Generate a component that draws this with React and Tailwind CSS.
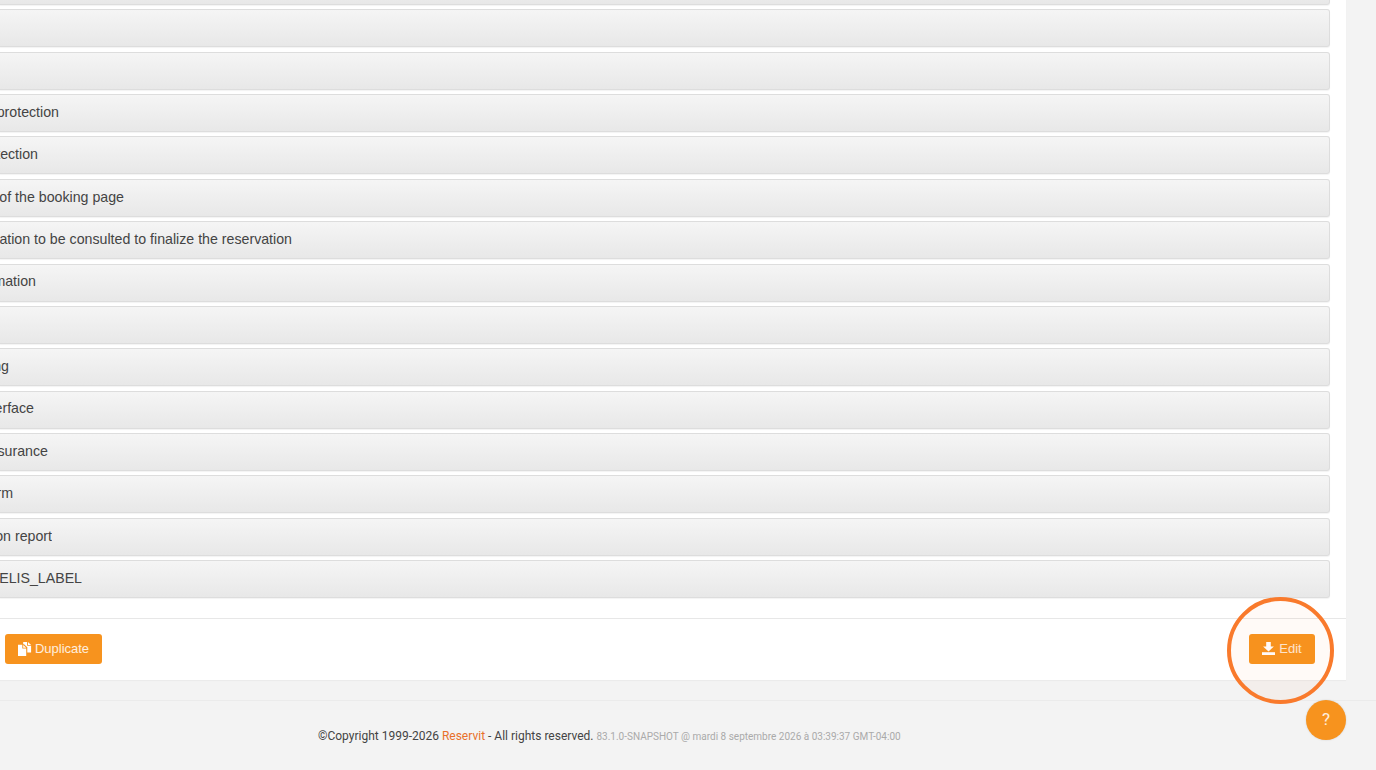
import React from 'react';

// Rows are cut by the left edge of the window: labels end-align in a box as wide as what is visible
const rows = [
  { text: '', w: 'w-0' },
  { text: '', w: 'w-0' },
  { text: '', w: 'w-0' },
  { text: 'Password protection', w: 'w-[59px]' },
  { text: 'Data protection', w: 'w-[38px]' },
  { text: 'Customization of the booking page', w: 'w-[124px]' },
  { text: 'Additional information to be consulted to finalize the reservation', w: 'w-[292px]' },
  { text: 'Confirmation', w: 'w-[36px]' },
  { text: '', w: 'w-0' },
  { text: 'Booking', w: 'w-[9px]' },
  { text: 'Interface', w: 'w-[34px]' },
  { text: 'Insurance', w: 'w-[48px]' },
  { text: 'Form', w: 'w-[13px]' },
  { text: 'Reservation report', w: 'w-[52px]' },
  { text: 'HOTELIS_LABEL', w: 'w-[82px]' },
];

const SaveIcon = () => (
  <svg viewBox="0 0 13 13" className="h-[13px] w-[13px] fill-current">
    <path d="M4.200 0h4.600v4.400h3.100L6.500 9.400 1.100 4.400h3.100z" />
    <path d="M0 10.200h13V13H0z" />
  </svg>
);

const DuplicateIcon = () => (
  <svg viewBox="0 0 14 14" className="h-[14px] w-[14px] fill-current">
    <path d="M5.200 0h3.900v3.800h4v6.700H9.300V5.300L6.100 2.200H5.200z" />
    <path d="M10 0l3.100 3H10z" />
    <path d="M0 2.800h4.300v3.700h3.900V14H0z" />
    <path d="M5.200 3l3 2.700h-3z" />
  </svg>
);

const App = () => {
  return (
    <div className="h-[770px] overflow-hidden bg-[#f3f3f3] font-['Liberation_Sans',sans-serif] relative">
      <div className="mr-[30px] -mt-[33px] h-[712.600px] bg-white shadow-[0_1px_1px_rgba(0,0,0,0.03)] flex flex-col">
        <div className="flex flex-col gap-[4.36px] pr-[16px]">
          {rows.map((row, i) => (
            <div
              key={i}
              className="h-[38px] flex items-center rounded-r-[3px] border border-l-0 border-[#dddddd] bg-gradient-to-b from-[#f5f5f5] to-[#e8e8e8] text-[14.2px] text-[#444444] shadow-[0_1px_1px_rgba(0,0,0,0.05)]"
            >
              <span className={`${row.w} flex justify-end overflow-hidden whitespace-nowrap pb-px`}>{row.text}</span>
            </div>
          ))}
        </div>
        <div className="mt-[19.600px] border-t border-[#e7e7e7] pt-[15px] pr-[31px] pl-[5px] flex justify-between">
          <button className="h-[30px] w-[97px] flex items-center justify-center gap-[3px] rounded-[3px] bg-[#f7931e] text-[13px] text-white/85">
            <span className="text-white"><DuplicateIcon /></span>
            <span className="pt-px">Duplicate</span>
          </button>
          <button className="h-[30px] w-[66px] flex items-center justify-center gap-[4px] rounded-[3px] bg-[#f7931e] text-[13px] text-white/80">
            <span className="text-white"><SaveIcon /></span>
            <span className="pt-px">Edit</span>
          </button>
        </div>
      </div>

      <div className="mt-[20px] border-t border-[#ebebeb] pt-[26px] pl-[318px] whitespace-nowrap font-['Roboto',sans-serif] text-[12px] text-[#444444]">
        ©Copyright 1999-2026 <span className="text-[#e8702a]">Reservit</span> - All rights reserved.{' '}
        <span className="text-[10px] text-[#aaaaaa]">83.1.0-SNAPSHOT @ mardi 8 septembre 2026 à 03:39:37 GMT-04:00</span>
      </div>

      {/* help bubble and the highlight ring lie over the page */}
      <div className="absolute left-[1306px] top-[700px] h-10 w-10 rounded-full bg-[#f7931e] flex items-center justify-center text-[17px] text-white/85 font-['Roboto',sans-serif] shadow-[0_0_2px_rgba(0,0,0,0.15)]">
        ?
      </div>
      <div className="absolute left-[1227px] top-[597px] h-[107px] w-[107px] rounded-full border-[4.5px] border-[#f97a2c] bg-[#f97a2c]/[0.04]" />
    </div>
  );
};

export default App;
